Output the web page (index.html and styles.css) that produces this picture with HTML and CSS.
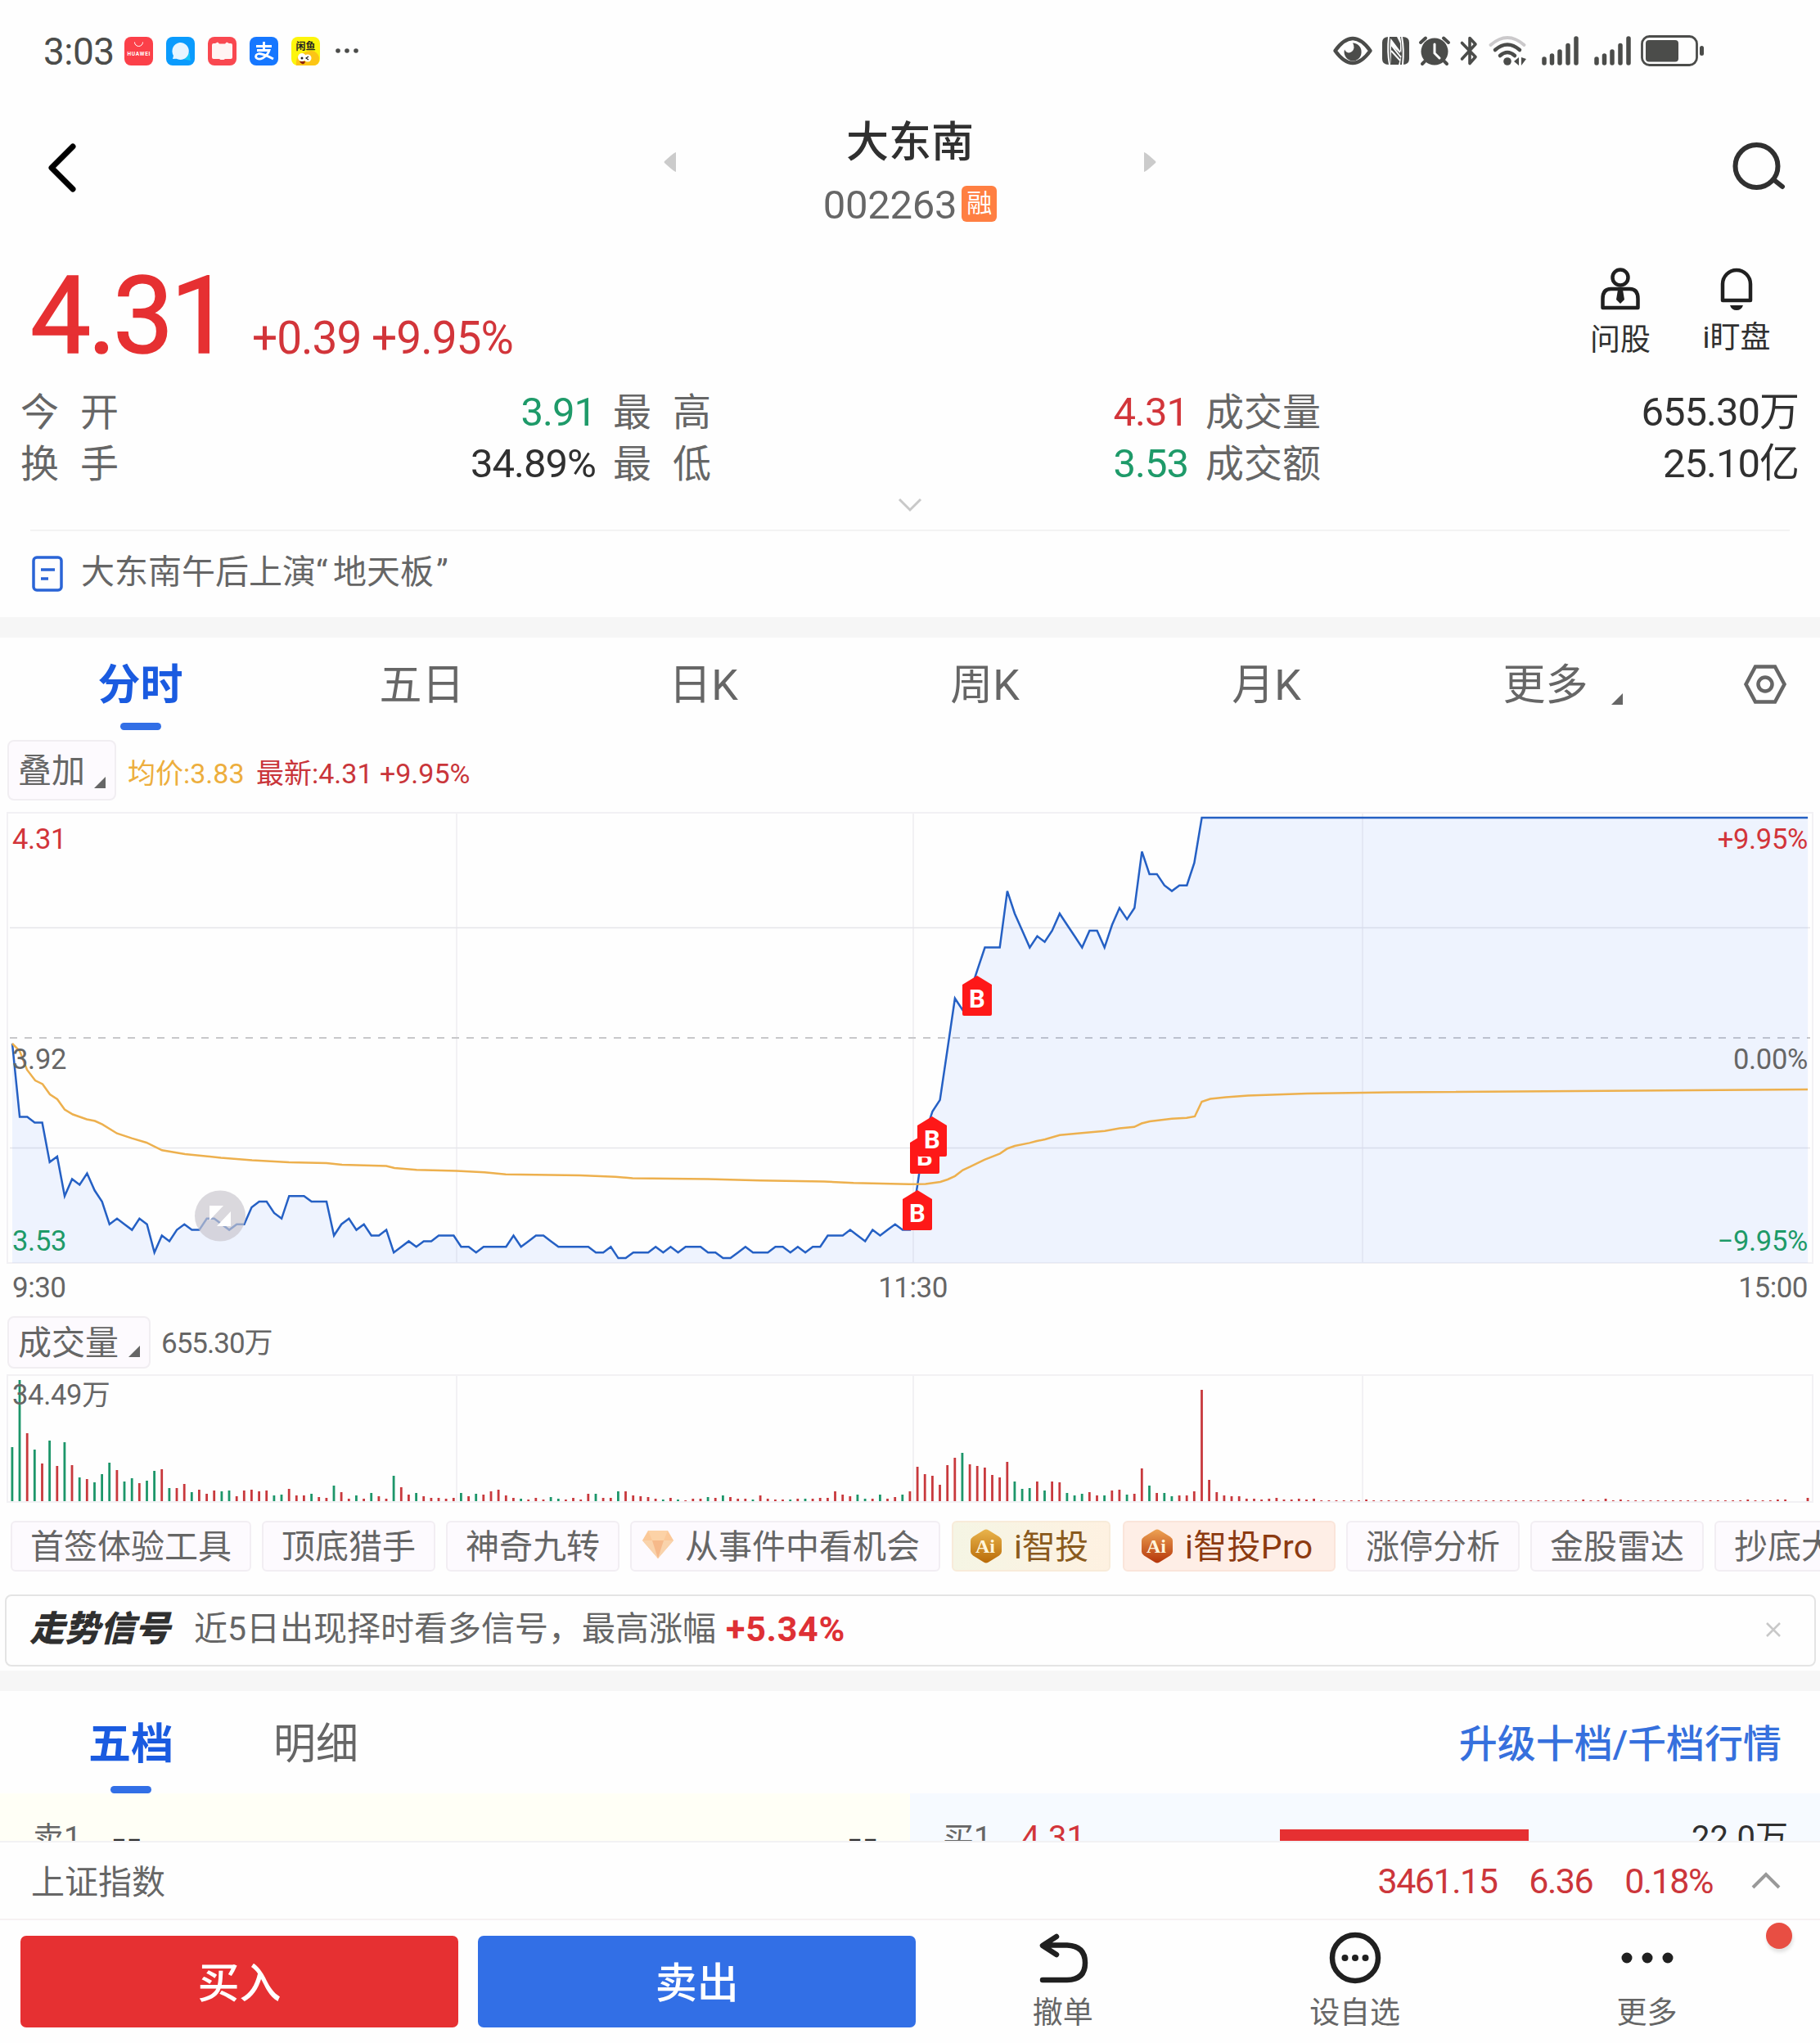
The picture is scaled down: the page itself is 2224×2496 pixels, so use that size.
FILE: index.html
```html
<!DOCTYPE html>
<html lang="zh-CN">
<head>
  <meta charset="UTF-8">
  <meta name="viewport" content="width=device-width, initial-scale=1.0">
  <title>大东南 002263</title>
  <link rel="stylesheet" href="styles.css">
</head>
<body>
  <div class="page">
    <div class="status-bar">
      <div class="status-left">
        <span class="clock">3:03</span>
        <svg class="app-icon" viewBox="0 0 35 35">
          <rect width="35" height="35" rx="8" fill="#fb4049"/>
          <path d="M12.500 6.500a5 5 0 0 0 10 0" fill="none" stroke="#fff" stroke-width="1"/>
          <text x="17.500" y="22.500" font-size="6.500" font-weight="700" text-anchor="middle" fill="#fff" textLength="28">HUAWEI</text>
        </svg>
        <svg class="app-icon" viewBox="0 0 35 35">
          <rect width="35" height="35" rx="8" fill="#0a9bfd"/>
          <path d="M23 20h6v5l1 4-5-1a7 7 0 0 1-6-3z" fill="#12c6f5"/>
          <path d="M16.500 7a10.500 10.500 0 1 1-4 19.800L8 27l1-4a10.500 10.500 0 0 1 7.500-16z" fill="#e6f5ff"/>
        </svg>
        <svg class="app-icon" viewBox="0 0 35 35">
          <rect width="35" height="35" rx="8" fill="#f94850"/>
          <path d="M7 8h2l3-1.500 2 2h7l2-2L26 8h2q2 0 2 2v15q0 2-2 2h-7l-1.500 1h-4L14 27H7q-2 0-2-2V10q0-2 2-2z" fill="#fff4f3"/>
        </svg>
        <svg class="app-icon" viewBox="0 0 35 35">
          <rect width="35" height="35" rx="8" fill="#1677ff"/>
          <path d="M8 11.500h19M17.500 6v10M9 16.500h15q-2 6-8 9.500-5 2.500-8-0.500-1.500-4 3.500-5 5 0 17.500 6.500" fill="none" stroke="#fff" stroke-width="2.800"/>
        </svg>
        <svg class="app-icon" viewBox="0 0 35 35">
          <rect width="35" height="35" rx="8" fill="#fdf50c"/>
          <text x="17.500" y="15.500" font-size="12" font-weight="700" text-anchor="middle" fill="#222">闲鱼</text>
          <path d="M6 35q-1-14 10-16 14-6 18 6v4q-1 6-8 6z" fill="#fcc515"/>
          <circle cx="13" cy="25" r="5" fill="#fff"/><circle cx="20" cy="26" r="4.500" fill="#fff"/>
          <circle cx="13" cy="26" r="1.500" fill="#222"/><path d="M21 24l-3 2 3 2" fill="none" stroke="#222" stroke-width="1.200"/>
          <path d="M10 30h7q-1 4-4 3-2-1-3-3z" fill="#8f2410"/>
        </svg>
        <svg class="status-more" viewBox="0 0 28 6"><circle cx="3" cy="3" r="2.800"/><circle cx="14" cy="3" r="2.800"/><circle cx="25" cy="3" r="2.800"/></svg>
      </div>
      <div class="status-right">
        <svg class="st-eye" viewBox="0 0 48 36">
          <path d="M2.500 18Q24-12 45.500 18 24 48 2.500 18z" fill="none" stroke="#4b4c4a" stroke-width="4.500" stroke-linejoin="round"/>
          <path d="M24 8.500a10.500 11 0 1 1-10 8q2 4 5.500 4 5-1 6-6 0-4-1.500-6z" fill="#4b4c4a"/>
        </svg>
        <svg class="st-nfc" viewBox="0 0 33 34">
          <path d="M8 0h3q-3 8 0 34H8q-8 0-8-7V7q0-7 8-7zM25 0h-3q3 12 0 34h3q8 0 8-7V7q0-7-8-7z" fill="#4b4c4a"/>
          <path d="M9 0h9l4 8v12L11 10v24h9l4-14" fill="#4b4c4a"/>
          <path d="M8 0q-2 18 1 34M25 34q2-18-1-34M11 10l12 15M11 17l11 12" fill="none" stroke="#fff" stroke-width="2"/>
        </svg>
        <svg class="st-alarm" viewBox="0 0 38 36">
          <circle cx="19" cy="19" r="16.500" fill="#4b4c4a"/>
          <path d="M2 8l6-5.500M36 8l-6-5.500M7 31l-3 3M31 31l3 3" stroke="#4b4c4a" stroke-width="4" stroke-linecap="round"/>
          <path d="M19 10v11l6 6" fill="none" stroke="#fff" stroke-width="3" stroke-linecap="round"/>
        </svg>
        <svg class="st-bt" viewBox="0 0 22 36">
          <path d="M2.500 8.500L19 25.500l-7 8V2.500l7 7.500L2.500 28" fill="none" stroke="#4b4c4a" stroke-width="3.600" stroke-linecap="round" stroke-linejoin="round"/>
        </svg>
        <svg class="st-wifi" viewBox="0 0 46 36">
          <path d="M2.500 11Q23-7 43.500 11" fill="none" stroke="#cbc9cb" stroke-width="4" stroke-linecap="round"/>
          <path d="M8 17Q23 4 38 17M14 24Q23 16 32 24" fill="none" stroke="#4b4c4a" stroke-width="4.500" stroke-linecap="round"/>
          <circle cx="23" cy="31" r="4.800" fill="#4b4c4a"/>
          <path d="M37 26v10l-6-5zM40 26v10l6-8z" fill="#4b4c4a"/>
        </svg>
        <svg class="st-signal" viewBox="0 0 45 36"><path d="M3 28v5M12.500 24v9M22 19v14M32 11.500V33M42 3v30"/></svg>
        <svg class="st-signal" viewBox="0 0 45 36"><path d="M3 28v5M12.500 24v9M22 19v14M32 11.500V33M42 3v30"/></svg>
        <svg class="st-battery" viewBox="0 0 77 38">
          <rect x="1.500" y="1.500" width="67" height="35" rx="9" fill="none" stroke="#4b4c4a" stroke-width="2.800"/>
          <rect x="6" y="6" width="40" height="26.500" rx="4" fill="#4b4c4a"/>
          <rect x="72" y="13" width="5" height="12" rx="2.500" fill="#4b4c4a"/>
        </svg>
      </div>
    </div>

    <div class="nav">
      <svg class="nav-back" viewBox="0 0 36 62"><path d="M31 5L5 31l26 26"/></svg>
      <div class="nav-center">
        <svg class="nav-prev" viewBox="0 0 16 26"><path d="M15 1v24Q13 25 1 14q-1-1 0-2Q13 1 15 1z"/></svg>
        <div class="nav-title">
          <div class="stock-name">大东南</div>
          <div class="stock-code"><span>002263</span><span class="rong">融</span></div>
        </div>
        <svg class="nav-next" viewBox="0 0 16 26"><path d="M1 1v24q2 0 14-11 1-1 0-2Q3 1 1 1z"/></svg>
      </div>
      <svg class="nav-search" viewBox="0 0 66 62"><circle cx="29.500" cy="30" r="26"/><path d="M51 47l10 8"/></svg>
    </div>

    <div class="quote">
      <div class="price">4.31</div>
      <div class="change">+0.39 +9.95%</div>
      <div class="quote-tools">
        <div class="tool">
          <svg viewBox="0 0 50 52">
            <circle cx="25" cy="12" r="9.500"/>
            <path d="M3.500 49V38q0-12 10-12h23q10 0 10 12v11z"/>
            <path class="solid" d="M22 27h6l2 12-5 5-5-5z"/>
          </svg>
          <span>问股</span>
        </div>
        <div class="tool tool-bell">
          <svg viewBox="0 0 50 52">
            <path d="M8 40V20a17 17 0 0 1 34 0v20z"/>
            <path class="solid" d="M17 46h16q-2 6-8 6t-8-6z"/>
          </svg>
          <span>i盯盘</span>
        </div>
      </div>
    </div>

    <div class="stats">
      <div class="stat"><span class="stat-label spread">今开</span><span class="down">3.91</span></div>
      <div class="stat"><span class="stat-label spread">最高</span><span class="up">4.31</span></div>
      <div class="stat"><span class="stat-label">成交量</span><span>655.30万</span></div>
      <div class="stat"><span class="stat-label spread">换手</span><span>34.89%</span></div>
      <div class="stat"><span class="stat-label spread">最低</span><span class="down">3.53</span></div>
      <div class="stat"><span class="stat-label">成交额</span><span>25.10亿</span></div>
    </div>
    <div class="expand"><svg viewBox="0 0 30 18"><path d="M2 2l13 13L28 2"/></svg></div>

    <div class="news">
      <svg viewBox="0 0 38 44">
        <rect x="2" y="2" width="34" height="40" rx="4"/>
        <path d="M11 17h17M11 28h9"/>
      </svg>
      <span>大东南午后上演<i class="quote-open">“</i>地天板<i class="quote-close">”</i></span>
    </div>

    <div class="divider"></div>

    <div class="tabs">
      <div class="tab active">分时</div>
      <div class="tab">五日</div>
      <div class="tab">日K</div>
      <div class="tab">周K</div>
      <div class="tab">月K</div>
      <div class="tab tab-more">更多<svg class="corner" viewBox="0 0 14 14"><path d="M14 0v14H0z"/></svg></div>
      <svg class="tab-setting" viewBox="0 0 52 48"><path d="M14 2.500h24L49.500 24 38 45.500H14L2.500 24z"/><circle cx="26" cy="24" r="8.500"/></svg>
    </div>

    <div class="legend">
      <div class="drop-btn drop-overlay">叠加<svg class="corner" viewBox="0 0 14 14"><path d="M14 0v14H0z"/></svg></div>
      <span class="avg">均价:3.83</span>
      <span class="latest">最新:4.31 +9.95%</span>
    </div>

    <svg class="price-chart" id="price-chart" viewBox="0 990 2224 556">
      <g class="grid">
        <rect x="9" y="993" width="2206" height="550"/>
        <path d="M558 993v550M1116 993v550M1665 993v550"/>
        <path class="mid" d="M12 1133.500H2212M12 1402.500H2212"/>
      </g>
      <path class="zero" d="M12 1268H2212"/>
      <path class="area" id="area"/>
      <path class="line" id="line"/>
      <polyline class="avg-line" points="15,1275 24,1284 33,1307 43,1320 52,1324.5 61,1337 70,1343 79,1355.6 89,1361.5 106,1367.5 116,1369.5 125,1373.7 143,1384.7 161,1390.6 179,1396 198,1405.3 226,1410 270,1414.5 308,1417.5 353,1420 399,1421 418,1423 472,1424.6 482,1427 509,1429.3 558,1430.5 592,1432.2 618,1434.8 709,1436 752,1437.7 773,1439.4 865,1440.6 929,1442.3 1007,1443.6 1043,1445.3 1111,1446.8 1131,1446.4 1149,1444 1158,1441 1167,1436.8 1176.5,1429.6 1185,1425.7 1203,1416.8 1222,1409.3 1231,1403.2 1240,1400 1258,1396.4 1267,1394 1277,1392 1295,1386.8 1322,1384.3 1350,1381.8 1368,1378.6 1386,1376.8 1395,1372.5 1405,1370 1432,1366.8 1450,1365.7 1460,1364 1468.5,1346 1479,1342.5 1498,1340.4 1525,1338.6 1597,1336 1700,1334.6 2209,1331"/>
      <g id="marks"></g>
      <g class="axis">
        <text class="up" x="15" y="1037">4.31</text>
        <text x="15" y="1306">3.92</text>
        <text class="down" x="15" y="1528">3.53</text>
        <text class="up end" x="2209" y="1037">+9.95%</text>
        <text class="end" x="2209" y="1306">0.00%</text>
        <text class="down end" x="2209" y="1528">−9.95%</text>
      </g>
      <g class="full-btn">
        <circle cx="269" cy="1485.500" r="31"/>
        <path d="M256 1473h17l-17 18zM282 1480v18h-17z"/>
      </g>
    </svg>
    <div class="times"><span>9:30</span><span>11:30</span><span>15:00</span></div>

    <div class="volume-head">
      <div class="drop-btn drop-volume">成交量<svg class="corner" viewBox="0 0 14 14"><path d="M14 0v14H0z"/></svg></div>
      <span class="volume-total">655.30万</span>
    </div>
    <svg class="volume-chart" viewBox="0 1678 2224 160">
      <g class="grid">
        <rect x="9" y="1680" width="2206" height="155"/>
        <path d="M558 1680v155M1116 1680v155M1665 1680v155"/>
      </g>
      <g id="bars"></g>
      <g class="axis"><text x="15" y="1716">34.49万</text></g>
    </svg>

    <div class="chips">
      <span class="chip">首签体验工具</span>
      <span class="chip">顶底猎手</span>
      <span class="chip">神奇九转</span>
      <span class="chip chip-event">
        <svg viewBox="0 0 38 36">
          <path d="M7 1h24l7 12-19 22L0 13z" fill="#fbc898"/>
          <path d="M0 13h38L19 35z" fill="#f9d3ac"/>
          <path d="M12 13h14l-7 22z" fill="#f6b98a"/>
          <path d="M7 1h24l-5 12H12z" fill="#fcd2a6"/>
        </svg>从事件中看机会</span>
      <span class="chip chip-gold">
        <svg viewBox="0 0 40 42">
          <defs><linearGradient id="gold" x1="0" y1="0" x2="0" y2="1"><stop offset="0" stop-color="#e9b44c"/><stop offset="1" stop-color="#b96b08"/></linearGradient></defs>
          <path d="M17 1.500q3-2 6 0l13 8q3 2 3 5v13q0 3-3 5l-13 8q-3 2-6 0l-13-8q-3-2-3-5v-13q0-3 3-5z" fill="url(#gold)"/>
          <text x="19" y="29">Ai</text>
        </svg>i智投</span>
      <span class="chip chip-pro">
        <svg viewBox="0 0 40 42">
          <defs><linearGradient id="copper" x1="0" y1="0" x2="0" y2="1"><stop offset="0" stop-color="#eda253"/><stop offset="1" stop-color="#b5350a"/></linearGradient></defs>
          <path d="M17 1.500q3-2 6 0l13 8q3 2 3 5v13q0 3-3 5l-13 8q-3 2-6 0l-13-8q-3-2-3-5v-13q0-3 3-5z" fill="url(#copper)"/>
          <text x="19" y="29">Ai</text>
        </svg>i智投Pro</span>
      <span class="chip">涨停分析</span>
      <span class="chip">金股雷达</span>
      <span class="chip">抄底大师</span>
    </div>

    <div class="signal">
      <span class="signal-logo">走势信号</span>
      <span class="signal-text">近5日出现择时看多信号，最高涨幅</span>
      <span class="signal-rate">+5.34%</span>
      <svg class="signal-close" viewBox="0 0 20 20"><path d="M2 2l16 16M18 2L2 18"/></svg>
    </div>

    <div class="divider divider-book"></div>

    <div class="book-tabs">
      <div class="tab active">五档</div>
      <div class="tab">明细</div>
      <a class="upgrade">升级十档/千档行情</a>
    </div>
    <div class="book">
      <div class="book-side sell">
        <span class="level">卖1</span><span class="book-price">--</span><span class="book-vol">--</span>
      </div>
      <div class="book-side buy">
        <span class="level">买1</span><span class="book-price up">4.31</span><span class="book-bar"></span><span class="book-vol">22.0万</span>
      </div>
    </div>

    <div class="index-bar">
      <span class="index-name">上证指数</span>
      <span class="index-num">3461.15</span>
      <span class="index-num">6.36</span>
      <span class="index-num">0.18%</span>
      <svg viewBox="0 0 38 24"><path d="M3 20L19 4l16 16"/></svg>
    </div>

    <div class="actions">
      <button class="btn buy-btn">买入</button>
      <button class="btn sell-btn">卖出</button>
      <div class="action">
        <svg viewBox="0 0 64 64"><path d="M24 6L7 17l17 11M8 16.500h29q22 1 22 21.500t-22 21H7"/></svg>
        <span>撤单</span>
      </div>
      <div class="action">
        <svg viewBox="0 0 64 64"><circle cx="32" cy="32" r="28"/><g class="dots"><circle cx="19.500" cy="32" r="4"/><circle cx="32" cy="32" r="4"/><circle cx="44.500" cy="32" r="4"/></g></svg>
        <span>设自选</span>
      </div>
      <div class="action">
        <svg viewBox="0 0 64 64"><g class="dots"><circle cx="7" cy="32" r="6.500"/><circle cx="32" cy="32" r="6.500"/><circle cx="57" cy="32" r="6.500"/></g></svg>
        <span>更多</span>
        <i class="red-dot"></i>
      </div>
    </div>
  </div>

  <script src="script.js"></script>
</body>
</html>
```
FILE: styles.css
```css
* {
  box-sizing: border-box;
}

body {
  margin: 0;
  background: #fefefe;
  font-family: Roboto, "Noto Sans CJK SC", sans-serif;
  color: #303030;
}

svg {
  display: block;
  flex: none;
  overflow: visible;
}

.page {
  width: 2224px;
  height: 2496px;
  overflow: hidden;
  display: flex;
  flex-direction: column;
}

.page > * {
  flex: none;
}

.up {
  color: #d2353a;
  fill: #d2353a;
}

.down {
  color: #1e9a69;
  fill: #1e9a69;
}

/* status bar */
.status-bar {
  height: 124px;
  padding: 0 142px 0 53px;
  display: flex;
  justify-content: space-between;
  align-items: center;
}

.status-left,
.status-right {
  display: flex;
  align-items: center;
}

.clock {
  font-size: 46px;
  line-height: 46px;
  width: 99px;
  padding-top: 2px;
  letter-spacing: -0.5px;
  color: #4b4c4a;
}

.app-icon {
  width: 35px;
  height: 35px;
  margin-right: 16px;
}

.status-more {
  width: 28px;
  height: 6px;
  margin-left: 3px;
  fill: #4b4c4a;
}

.st-eye { width: 48px; height: 36px; margin-right: 12px; }
.st-nfc { width: 33px; height: 34px; margin-right: 12px; }
.st-alarm { width: 38px; height: 36px; margin-right: 12px; }
.st-bt { width: 22px; height: 36px; margin-right: 13px; }
.st-wifi { width: 46px; height: 36px; margin-right: 19px; }

.st-signal {
  width: 45px;
  height: 36px;
  margin-right: 19px;
  fill: none;
  stroke: #4b4c4a;
  stroke-width: 5.5;
  stroke-linecap: round;
}

.st-signal + .st-battery {
  margin-left: -7px;
}

.st-battery { width: 77px; height: 38px; }

/* title bar */
.nav {
  height: 174px;
  padding: 0 41px 0 58px;
  display: flex;
}

.nav-back {
  width: 36px;
  height: 62px;
  margin-top: 50px;
  fill: none;
  stroke: #000;
  stroke-width: 7;
  stroke-linecap: round;
  stroke-linejoin: round;
}

.nav-center {
  width: 602px;
  margin: 0 auto 0 717px;
  display: flex;
  justify-content: space-between;
}

.nav-prev,
.nav-next {
  width: 16px;
  height: 26px;
  margin-top: 61px;
  fill: #cbcbcb;
}

.nav-title {
  padding-top: 19px;
}

.stock-name {
  font-size: 52px;
  line-height: 64px;
  font-weight: 500;
  text-align: center;
}

.stock-code {
  display: flex;
  align-items: center;
  margin-top: 20px;
  font-size: 49px;
  line-height: 48px;
  letter-spacing: -0.3px;
  color: #666;
}

.rong {
  width: 43px;
  height: 44px;
  margin: -5px 0 0 6px;
  border-radius: 6px;
  background: #ff7f42;
  color: #fff;
  font-size: 31px;
  line-height: 43px;
  text-align: center;
}

.nav-search {
  width: 66px;
  height: 62px;
  margin-top: 49px;
  fill: none;
  stroke: #303030;
  stroke-width: 6;
  stroke-linecap: round;
}

/* price */
.quote {
  height: 174px;
  padding-left: 37px;
  display: flex;
  color: #e63032;
}

.price {
  width: 271px;
  font-size: 132px;
  line-height: 132px;
  padding-top: 22px;
  letter-spacing: -4px;
  -webkit-text-stroke: 1.5px #e63032;
}

.change {
  padding-top: 83px;
  font-size: 55px;
  line-height: 64px;
  letter-spacing: -1px;
  color: #d2353a;
}

.quote-tools {
  margin: 29px 56px 0 auto;
  display: flex;
  color: #303030;
}

.tool {
  width: 92px;
  margin-right: 50px;
  display: flex;
  flex-direction: column;
  align-items: center;
  font-size: 37px;
  line-height: 44px;
}

.tool:last-child {
  margin-right: 0;
}

.tool svg {
  width: 50px;
  height: 52px;
  margin-bottom: 15px;
  fill: none;
  stroke: #202020;
  stroke-width: 4.5;
  stroke-linejoin: round;
}

.tool-bell svg {
  margin-bottom: 12px;
}

.tool .solid {
  fill: #202020;
  stroke: none;
}

/* stats */
.stats {
  padding: 0 26px 0 25px;
  display: grid;
  grid-template-columns: 701px 701px 726px;
  column-gap: 23px;
  grid-auto-rows: 63px;
}

.stat {
  display: flex;
  justify-content: space-between;
  align-items: center;
  font-size: 49px;
  line-height: 63px;
}

.stat span:last-child {
  margin-right: -2px;
  letter-spacing: -1px;
}

.stat:nth-child(3n) span:last-child {
  margin-right: 1px;
}

.stat .stat-label {
  font-size: 47px;
  color: #666;
}

.spread {
  letter-spacing: 26px;
}

.expand {
  height: 49px;
  padding-top: 10px;
  display: flex;
  justify-content: center;
}

.expand svg {
  width: 30px;
  height: 18px;
  fill: none;
  stroke: #c8c8c8;
  stroke-width: 3;
}

.news {
  height: 107px;
  margin: 0 37px;
  padding-left: 2px;
  border-top: 2px solid #f3f3f3;
  display: flex;
  align-items: center;
  font-size: 41px;
  line-height: 50px;
  color: #666;
}

.news svg {
  width: 38px;
  height: 44px;
  margin: 0 22px 2px 0;
  fill: none;
  stroke: #2a64d6;
  stroke-width: 3.500;
}

.news span {
  margin-bottom: 5px;
}

.quote-open,
.quote-close {
  display: inline-block;
  width: 21px;
  font-style: normal;
}

.quote-close {
  padding-left: 3px;
}

.divider {
  height: 25px;
  background: #f6f6f6;
}

/* period tabs */
.tabs {
  height: 122px;
  display: flex;
  padding-right: 41px;
}

.tab {
  width: 344px;
  padding: 25px 1px 0 0;
  font-size: 52px;
  line-height: 68px;
  color: #666;
  text-align: center;
}

.tab.active {
  font-weight: 700;
  color: #1a5be0;
}

.tab.active::after {
  content: "";
  display: block;
  width: 50px;
  height: 9px;
  margin: 11px auto 0;
  border-radius: 5px;
  background: #326fe6;
}

.tab-more {
  display: flex;
  justify-content: center;
  padding-left: 36px;
}

.corner {
  width: 14px;
  height: 14px;
  fill: #666;
}

.tab-more .corner {
  margin: 43px 0 0 28px;
}

.tab-setting {
  width: 52px;
  height: 48px;
  margin: 33px 0 0 auto;
  fill: none;
  stroke: #666;
  stroke-width: 4.500;
}

/* legend */
.legend {
  height: 89px;
  padding: 3px 0 0 9px;
  display: flex;
  font-size: 34px;
  line-height: 83px;
}

.drop-btn {
  display: flex;
  padding-left: 11px;
  border: 2px solid #f1eef2;
  border-radius: 8px;
  background: #fdfafe;
  font-size: 41px;
  color: #666;
}

.drop-overlay {
  width: 133px;
  height: 74px;
  line-height: 73px;
}

.drop-overlay .corner {
  margin: 43px 0 0 11px;
}

.avg {
  margin-left: 14px;
  width: 157px;
  color: #edae3d;
}

.latest {
  color: #c9353a;
}

/* charts */
.price-chart {
  width: 2224px;
  height: 556px;
}

.volume-chart {
  width: 2224px;
  height: 160px;
}

.grid {
  fill: none;
  stroke: #f2f1f4;
  stroke-width: 2;
}

.grid .mid {
  stroke: #e6e6ea;
  stroke-width: 1.500;
}

.zero {
  stroke: #c8c8ca;
  stroke-width: 2;
  stroke-dasharray: 9 9;
}

.area {
  fill: rgba(50, 110, 255, 0.08);
}

.line {
  fill: none;
  stroke: #2560c4;
  stroke-width: 2.500;
}

.avg-line {
  fill: none;
  stroke: #edb04e;
  stroke-width: 2.500;
}

.axis text {
  font-size: 34.500px;
  letter-spacing: -0.300px;
  fill: #666;
}

.axis .up { fill: #d2353a; }
.axis .down { fill: #1e9a69; }
.axis .end { text-anchor: end; }

.mark path {
  fill: #fe1818;
}

.mark text {
  fill: #fff;
  font-size: 31px;
  font-weight: 700;
  text-anchor: middle;
}

.full-btn circle {
  fill: rgba(200, 198, 205, 0.68);
}

.full-btn path {
  fill: #fff;
}

.bar-up { fill: #c8393d; }
.bar-down { fill: #1d966a; }

.times {
  height: 62px;
  padding: 0 15px;
  display: grid;
  grid-template-columns: 1fr 1fr 1fr;
  font-size: 35px;
  line-height: 56px;
  letter-spacing: -0.5px;
  color: #666;
}

.times span:nth-child(2) { text-align: center; padding-left: 7px; }
.times span:nth-child(3) { text-align: right; }

.volume-head {
  height: 70px;
  padding-left: 9px;
  display: flex;
  font-size: 35px;
  line-height: 68px;
  color: #666;
}

.volume-total {
  letter-spacing: -1px;
}

.drop-volume {
  width: 175px;
  height: 64px;
  line-height: 62px;
  margin-right: 13px;
}

.drop-volume .corner {
  margin: 34px 0 0 12px;
}

/* tool chips */
.chips {
  width: 2400px;
  margin-top: 20px;
  padding-left: 13px;
  display: flex;
  gap: 13px;
}

.chip {
  height: 62px;
  padding: 2px 22px 0;
  border: 2px solid #f2eef3;
  border-radius: 6px;
  background: #fdfafe;
  display: flex;
  align-items: center;
  font-size: 41px;
  line-height: 56px;
  color: #666;
}

.chip-event {
  width: 379px;
  padding: 2px 0 0 13px;
}

.chip-event svg {
  width: 38px;
  height: 36px;
  margin: -6px 14px 0 0;
}

.chip-gold,
.chip-pro {
  margin-left: 1px;
  padding: 2px 0 0 20px;
}

.chip-gold {
  width: 194px;
  letter-spacing: -0.300px;
  border-color: #f8ebd9;
  background: linear-gradient(90deg, #f5f5e4, #fef1e1);
  color: #8a5a1c;
}

.chip-pro {
  width: 260px;
  margin-left: 2px;
  letter-spacing: 0.3px;
  border-color: #fae5da;
  background: #feeee6;
  color: #8c3a10;
}

.chip-gold svg,
.chip-pro svg {
  width: 40px;
  height: 42px;
  margin: -2px 14px 0 0;
}

.chip text {
  font-family: "Liberation Serif", serif;
  font-weight: 700;
  font-size: 24px;
  letter-spacing: 0;
  text-anchor: middle;
  fill: #fff6dc;
}

/* signal card */
.signal {
  height: 88px;
  margin: 28px 5px 0 6px;
  padding: 0 40px 5px 28px;
  border: 2px solid #e4e4e4;
  border-radius: 8px;
  display: flex;
  align-items: center;
  font-size: 41px;
  line-height: 60px;
  color: #666;
}

.signal-logo {
  width: 201px;
  font-size: 43px;
  font-weight: 900;
  font-style: italic;
  color: #303030;
}

.signal-rate {
  margin-left: 12px;
  font-size: 43px;
  letter-spacing: 0.7px;
  font-weight: 700;
  color: #de3035;
}

.signal-close {
  width: 20px;
  height: 20px;
  margin: 3px 0 0 auto;
  fill: none;
  stroke: #c8c8c8;
  stroke-width: 2.500;
}

.divider-book {
  margin-top: 5px;
}

/* order book */
.book-tabs {
  height: 125px;
  padding: 0 47px 0 47px;
  display: flex;
}

.book-tabs .tab {
  width: 226px;
  padding: 32px 0 0;
}

.book-tabs .tab.active::after {
  margin-top: 16px;
}

.upgrade {
  margin-left: auto;
  font-size: 47px;
  font-weight: 500;
  line-height: 130px;
  color: #3670dd;
}

.book {
  height: 58px;
  overflow: hidden;
  display: flex;
}

.book-side {
  width: 1112px;
  height: 100px;
  padding: 0 39px 0 40px;
  display: flex;
  font-size: 38px;
  line-height: 110px;
  color: #666;
}

.sell { background: #fffff6; }
.buy { background: #f6faff; }

.level {
  width: 96px;
}

.book-price {
  font-size: 40px;
}

.book-vol {
  margin-left: auto;
  font-size: 40px;
  color: #303030;
}

.sell .book-price,
.sell .book-vol {
  font-family: Inter, sans-serif;
  font-size: 41px;
  color: #303030;
}

.book-bar {
  width: 304px;
  height: 26px;
  margin: 44px 0 0 238px;
  background: #e63032;
}

/* index */
.index-bar {
  height: 97px;
  padding: 0 47px 0 38px;
  border-top: 2px solid #f2f2f4;
  border-bottom: 2px solid #f6f1f2;
  display: flex;
  align-items: center;
  gap: 39px;
  font-size: 41px;
  color: #666;
}

.index-name {
  margin: 0 auto 3px 0;
}

.index-num {
  padding-top: 1px;
  font-size: 43px;
  letter-spacing: -1.500px;
  color: #cc363b;
}

.index-bar svg {
  width: 38px;
  height: 24px;
  margin-left: 7px;
  fill: none;
  stroke: #999;
  stroke-width: 4;
}

/* bottom actions */
.actions {
  height: 150px;
  padding: 19px 33px 0 25px;
  display: flex;
}

.btn {
  width: 536px;
  height: 112px;
  margin-right: 24px;
  padding: 0 0 5px;
  border: none;
  border-radius: 7px;
  font-family: inherit;
  font-size: 51px;
  font-weight: 500;
  color: #fff;
}

.buy-btn { background: #e63032; }
.sell-btn { background: #326fe6; margin-right: 1px; }

.action {
  position: relative;
  width: 357.500px;
  margin-top: -5px;
  display: flex;
  flex-direction: column;
  align-items: center;
  font-size: 37px;
  line-height: 44px;
  color: #666;
}

.action svg {
  width: 64px;
  height: 64px;
  margin-bottom: 14px;
  fill: none;
  stroke: #202020;
  stroke-width: 6.500;
  stroke-linecap: round;
  stroke-linejoin: round;
}

.action .dots {
  fill: #202020;
  stroke: none;
}

.red-dot {
  position: absolute;
  top: -11px;
  right: 1px;
  width: 32px;
  height: 32px;
  border-radius: 50%;
  background: #e84e43;
  box-shadow: 1px 4px 4px rgba(0, 0, 0, 0.12);
}
```
FILE: script.js
```js
// price of every minute, in cents away from yesterday's close (3.92)
const prices = [
  -1, -14, -14, -15, -15, -22, -21, -28, -25, -26, -24, -27, -29, -33, -32, -33, -34, -32, -33, -38,
  -35, -36, -34, -33, -34, -34, -32, -32, -33, -34, -33, -33, -30, -29, -29, -31, -32, -28, -28, -28,
  -29, -29, -29, -35, -33, -32, -34, -33, -35, -35, -34, -38, -37, -36, -37, -36, -36, -35, -35, -35,
  -37, -37, -38, -37, -37, -37, -37, -35, -37, -36, -35, -35, -36, -37, -37, -37, -37, -37, -38, -38,
  -37, -39, -39, -38, -38, -38, -37, -38, -37, -38, -37, -37, -37, -38, -38, -39, -39, -38, -37, -38,
  -38, -38, -37, -37, -38, -37, -38, -37, -37, -35, -35, -35, -34, -35, -36, -34, -35, -34, -33, -34,
  -34, -26, -17, -13, -11, -2, 7, 5, 8, 12, 16, 16, 16, 26, 22, 19, 16, 18, 17, 19,
  22, 20, 18, 16, 19, 19, 16, 20, 23, 21, 23, 33, 29, 29, 27, 26, 27, 27, 31, 39
];
while (prices.length < 241) prices.push(39);

// r = up minute, g = down minute, number = bar height
const volumes = ('g66 g148 r83 g63 r46 g74 r43 g72 r44 g29 r27 g23 g33 g47 r38 g24 g28 r22 g25 g37 ' +
  'r39 g16 r16 r21 g11 r14 r9 r13 g12 g13 r6 r13 r14 r12 r13 g7 g8 r15 r7 r7 ' +
  'g9 r5 r4 g19 r11 r3 g7 r3 g10 r6 r3 g31 r17 r8 g10 r6 r4 r4 r3 r4 ' +
  'g10 r6 g9 r8 r12 r14 r7 r4 g3 r2 r4 r2 g5 g3 r2 r4 r2 r9 g9 r4 ' +
  'r4 g12 r12 r7 r6 r5 r3 g2 r4 g2 r1 r3 r3 g5 r4 g7 r5 r3 r3 g2 ' +
  'r7 r3 r2 r2 g2 r3 g3 r3 r4 r4 r12 r8 r6 g8 g3 r3 g8 r3 r5 g8 ' +
  'r12 r42 r33 r31 r20 r44 r53 g59 r45 r43 r41 r32 r29 r48 g24 g15 g16 r24 g13 r24 ' +
  'r23 g10 g7 g9 r11 r7 g7 r13 r14 g8 r9 r40 g19 r10 g10 g6 r7 r7 r12 r136 ' +
  'r26 r11 r7 r6 r6 r3 r3 r2 r3 r4 r2 r2 r3 r2 r3 r1 r1 r1 r1 r1').split(' ');
const bumps = { 181: 2, 210: 2, 213: 3, 215: 2, 232: 2, 236: 2, 237: 2, 238: 0, 239: 0, 240: 4 };
for (let i = volumes.length; i < 241; i++) {
  volumes.push('r' + (i in bumps ? bumps[i] : 1));
}

const px = i => 15 + i * 9.142;
const py = cents => 1268 - cents * 6.9;

const path = 'M' + prices.map((c, i) => px(i).toFixed(1) + ' ' + py(c).toFixed(1)).join('L');
document.getElementById('line').setAttribute('d', path);
document.getElementById('area').setAttribute('d', path + 'V1543H15Z');

// buy marks: x and y of the tip
const marks = [[1121, 1454], [1130, 1385], [1139, 1364], [1194, 1192]];
document.getElementById('marks').innerHTML = marks.map(([x, y]) =>
  `<g class="mark" transform="translate(${x} ${y})">
    <path d="M0 0l18 11v36q0 2-2 2h-32q-2 0-2-2V11z"/>
    <text x="0" y="39">B</text>
  </g>`).join('');

document.getElementById('bars').innerHTML = volumes.map((v, i) => {
  const h = Number(v.slice(1));
  const cls = v[0] === 'r' ? 'bar-up' : 'bar-down';
  return `<rect class="${cls}" x="${(px(i) - 1.5).toFixed(1)}" y="${1834 - h}" width="2.8" height="${h}"/>`;
}).join('');
```
